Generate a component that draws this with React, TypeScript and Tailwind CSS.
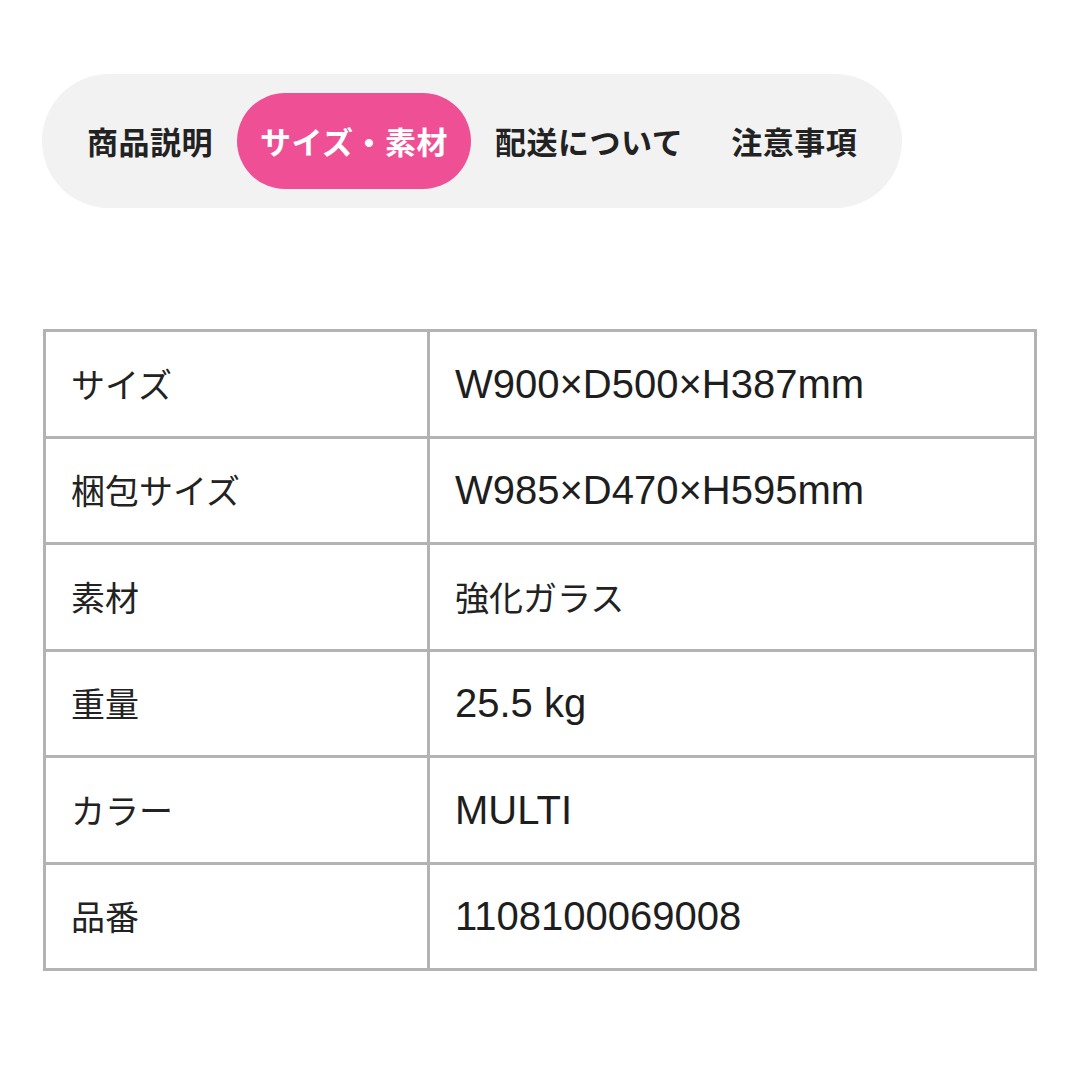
export default function App() {
  const tabs = ["商品説明", "サイズ・素材", "配送について", "注意事項"];
  const rows: [string, string, boolean][] = [
    ["サイズ", "W900×D500×H387mm", true],
    ["梱包サイズ", "W985×D470×H595mm", true],
    ["素材", "強化ガラス", false],
    ["重量", "25.5 kg", true],
    ["カラー", "MULTI", true],
    ["品番", "1108100069008", true],
  ];
  return (
    <div
      className="w-[1080px] h-[1080px] bg-white text-[#222]"
      style={{ fontFamily: '"Noto Sans CJK JP", "Noto Sans", sans-serif' }}
    >
      <div className="pt-[74px] pl-[42px]">
        <div className="inline-flex items-center h-[134px] px-[21px] rounded-full bg-[#f2f2f2]">
          {tabs.map((t, i) => (
            <div
              key={t}
              className={
                i === 1
                  ? "h-[96px] flex items-center px-[23px] rounded-full bg-[#ef4f94] text-white font-bold text-[31px] tracking-[0.5px]"
                  : "h-[96px] flex items-center px-[24px] font-bold text-[31px] tracking-[0.5px]"
              }
            >
              {t}
            </div>
          ))}
        </div>
      </div>
      <div className="mt-[121px] ml-[43px] w-[994px]">
        <table className="w-full border-collapse">
          <tbody>
            {rows.map(([k, v, latin]) => (
              <tr key={k} className="h-[106.5px]">
                <td className="w-[384px] border-[3px] border-[#b3b3b3] pl-[25px] text-[34px] leading-none align-middle">
                  {k}
                </td>
                <td
                  className={
                    latin
                      ? "border-[3px] border-[#b3b3b3] pl-[25px] text-[40px] leading-none align-middle font-['Liberation_Sans',sans-serif] text-[#1e1e1e]"
                      : "border-[3px] border-[#b3b3b3] pl-[25px] text-[34px] leading-none align-middle"
                  }
                >
                  {v}
                </td>
              </tr>
            ))}
          </tbody>
        </table>
      </div>
    </div>
  );
}
